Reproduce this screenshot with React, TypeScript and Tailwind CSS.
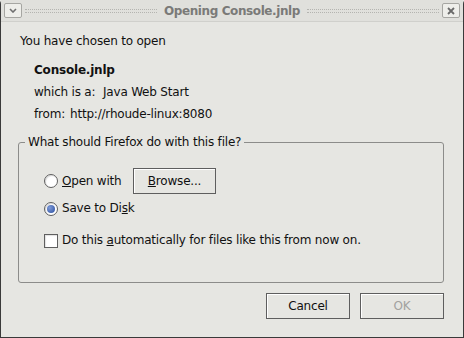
import React from 'react'

function Radio({ checked }: { checked?: boolean }) {
  return (
    <span className="flex h-[14px] w-[14px] items-center justify-center rounded-full border border-[#5f5f5f] bg-white shadow-[inset_1px_1px_1px_rgba(0,0,0,0.15)]">
      {checked && <span className="h-[8px] w-[8px] rounded-full bg-[radial-gradient(circle_at_35%_35%,#7d9ad8,#2c4f9e)]" />}
    </span>
  )
}

function Btn({ children, disabled, className = '' }: { children: React.ReactNode; disabled?: boolean; className?: string }) {
  return (
    <button
      type="button"
      className={
        'flex items-center justify-center border border-[#5e5e5e] bg-[#e6e6e2] shadow-[inset_1px_1px_0_#fff] ' +
        (disabled ? 'text-[#a2a2a0] ' : 'text-[#101010] ') +
        className
      }
    >
      {children}
    </button>
  )
}

export default function App() {
  return (
    <div className="h-[338px] w-[464px] overflow-hidden bg-[#e6e6e2] font-['DejaVu_Sans',sans-serif] text-[12px] leading-[15px] tracking-[-0.2px] text-[#111]">
      <div className="flex h-full flex-col rounded-t-[4px] border-x border-b border-[#3a3a3a] border-t-[#cfcfcb]">
        {/* title bar */}
        <div className="flex h-[22px] items-center gap-[3px] border-b border-[#d0d0cc] bg-[#e0e0dc] px-[3px]">
          <span className="flex h-[15px] w-[18px] items-center justify-center rounded-[2px] border border-[#a6a6a2] bg-[#eeeeea]">
            <svg width="8" height="5" viewBox="0 0 8 5">
              <path d="M1 1 L4 4 L7 1" stroke="#707070" strokeWidth="1.6" fill="none" />
            </svg>
          </span>
          <span className="mt-[1px] h-[4px] flex-1 border-y border-dotted border-[#b4b4b0]" />
          <span className="mt-[2px] px-[4px] text-[12px] font-bold tracking-[-0.4px] text-[#7a7a78]">Opening Console.jnlp</span>
          <span className="mt-[1px] h-[4px] flex-1 border-y border-dotted border-[#b4b4b0]" />
          <span className="flex h-[15px] w-[18px] items-center justify-center rounded-[2px] border border-[#a6a6a2] bg-[#eeeeea]">
            <svg width="8" height="8" viewBox="0 0 8 8">
              <path d="M1 1 L7 7 M7 1 L1 7" stroke="#6a6a6a" strokeWidth="1.8" />
            </svg>
          </span>
        </div>

        <div className="flex flex-1 flex-col pl-[17px] pr-[19px]">
          <p className="mt-[12px] pl-[2px]">You have chosen to open</p>
          <p className="mt-[14px] pl-[16px] font-bold">Console.jnlp</p>
          <div className="mt-[7px] flex flex-col gap-[7px] pl-[16px]">
            <div className="flex">
              <span className="w-[69px]">which is a:</span>
              <span>Java Web Start</span>
            </div>
            <div className="flex">
              <span className="w-[36px]">from:</span>
              <span>http://rhoude-linux:8080</span>
            </div>
          </div>

          <fieldset className="mt-[13px] h-[148px] rounded-[3px] border border-[#8c8c8a] px-0">
            <legend className="ml-[6px] px-[3px]">What should Firefox do with this file?</legend>
            <div className="pl-[25px]">
              <div className="mt-[18px] flex items-center">
                <Radio />
                <span className="ml-[4px] w-[71px]">
                  <u>O</u>pen with
                </span>
                <Btn className="h-[26px] w-[83px]">
                  <span>
                    <u>B</u>rowse...
                  </span>
                </Btn>
              </div>
              <div className="mt-[7px] flex items-center">
                <Radio checked />
                <span className="ml-[4px]">
                  Save to Di<u>s</u>k
                </span>
              </div>
              <div className="mt-[17px] flex items-center">
                <span className="h-[14px] w-[14px] border border-[#5f5f5f] bg-white shadow-[inset_1px_1px_1px_rgba(0,0,0,0.12)]" />
                <span className="ml-[4px]">
                  Do this <u>a</u>utomatically for files like this from now on.
                </span>
              </div>
            </div>
          </fieldset>

          <div className="mt-[10px] flex justify-end gap-[10px]">
            <Btn className="h-[26px] w-[84px]">Cancel</Btn>
            <Btn className="h-[26px] w-[84px]" disabled>
              OK
            </Btn>
          </div>
        </div>
      </div>
    </div>
  )
}
